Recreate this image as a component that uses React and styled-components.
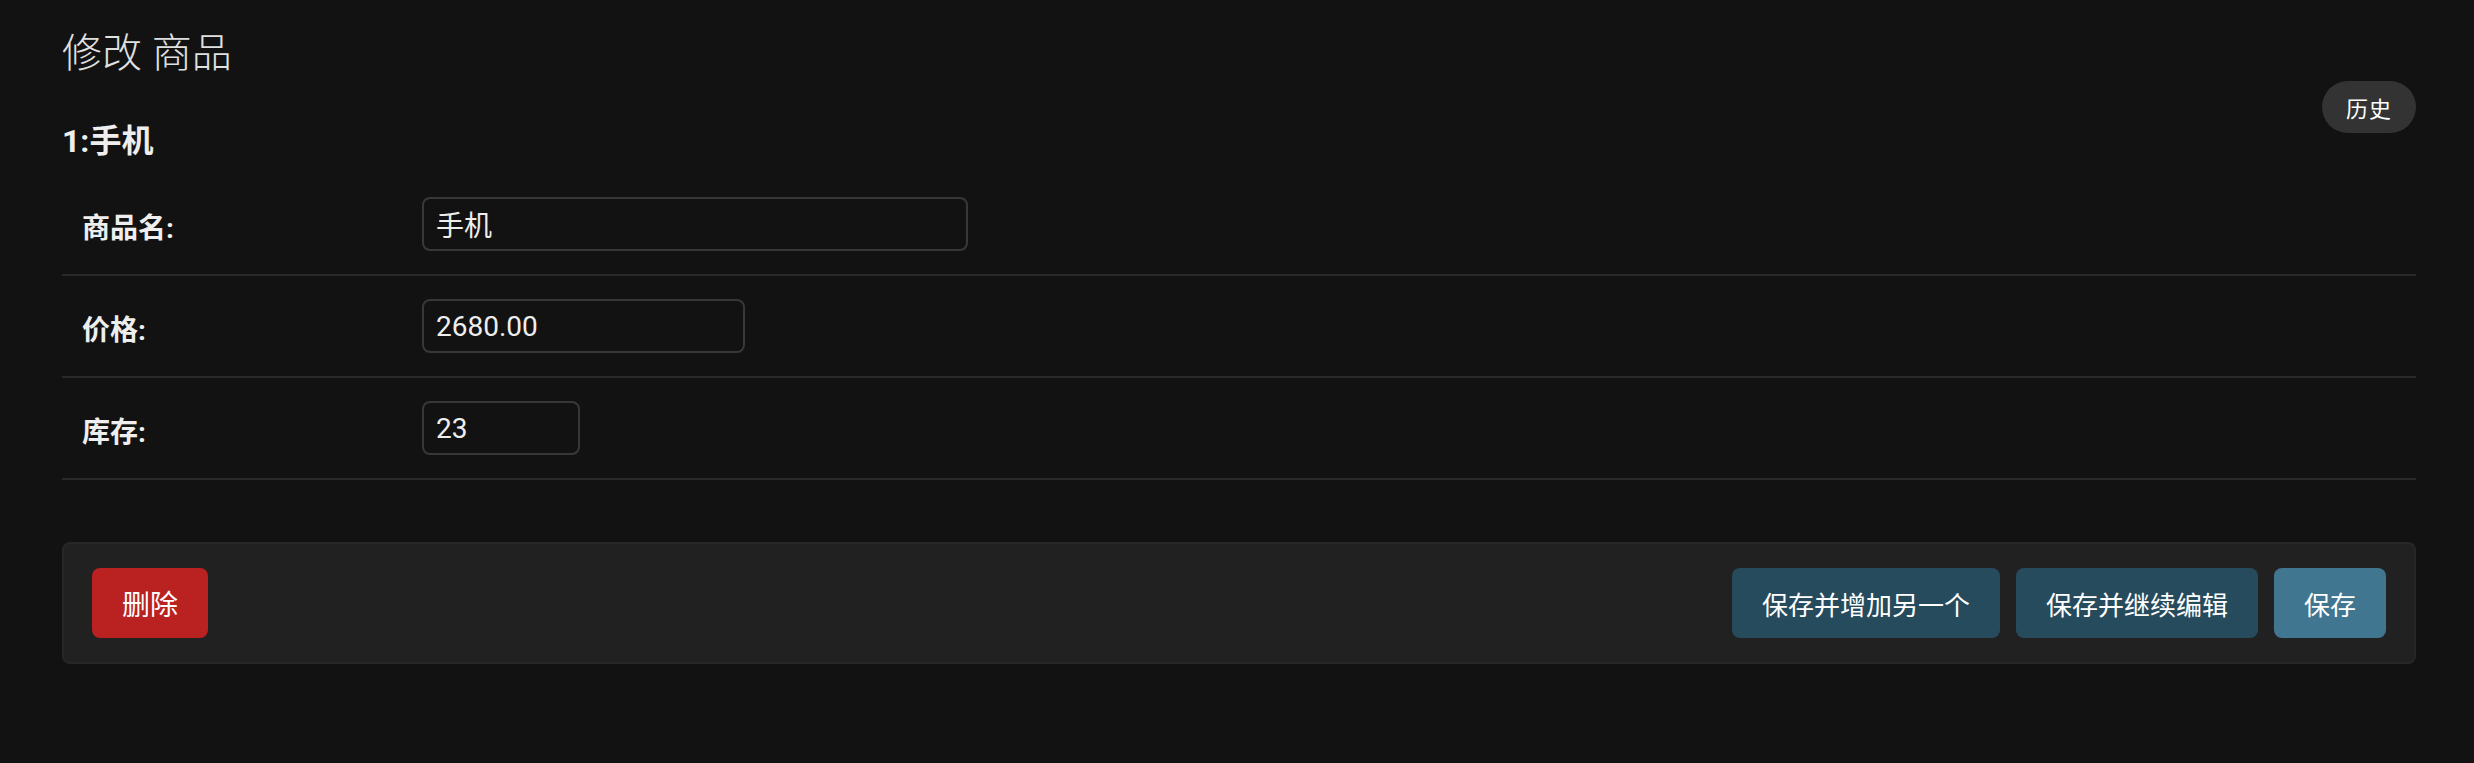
import React from 'react';
import styled, { createGlobalStyle } from 'styled-components';

const GlobalStyle = createGlobalStyle`
   html, body {
      margin:0;
      padding:0;
      background:#121212;
   }
   body {
      font-family: Roboto, "Noto Sans CJK SC", sans-serif;
      color:#eeeeee;
   }
`

const Content = styled.div`
   padding:30px 58px 40px 62px;
`
const Header = styled.div`
   display:flex;
   flex-direction:row;
   justify-content:space-between;
   align-items:flex-start;
`
const TitleBlock = styled.div`
   display:flex;
   flex-direction:column;
`
const Title = styled.h1`
   margin:0;
   font-size:40px;
   line-height:48px;
   font-weight:300;
   color:#e0e0e0;
`
const Subtitle = styled.h2`
   margin:43px 0 13px 0;
   font-size:32px;
   line-height:40px;
   font-weight:700;
   color:#eeeeee;
`
const HistoryLink = styled.a`
   margin-top:51px;
   display:inline-flex;
   align-items:center;
   height:52px;
   padding:0 24px;
   border-radius:30px;
   background:#333333;
   color:#ffffff;
   font-size:22px;
   letter-spacing:1px;
   text-decoration:none;
   cursor:pointer;
`
const Fieldset = styled.div`
   display:flex;
   flex-direction:column;
`
const FormRow = styled.div`
   display:flex;
   flex-direction:row;
   align-items:center;
   height:100px;
   padding:0 20px;
   border-bottom:2px solid #2a2a2a;
`
const Label = styled.label`
   width:340px;
   flex-shrink:0;
   padding-top:4px;
   font-size:28px;
   font-weight:700;
   color:#eeeeee;
`
const Input = styled.input`
   box-sizing:border-box;
   width:${({ $width }) => $width}px;
   height:54px;
   padding:0 12px;
   border:2px solid #383838;
   border-radius:8px;
   background:#121212;
   color:#eeeeee;
   font-family:Roboto, "Noto Sans CJK SC", sans-serif;
   font-size:28px;
   outline:0;
`
const SubmitRow = styled.div`
   margin-top:62px;
   display:flex;
   flex-direction:row;
   align-items:center;
   gap:16px;
   padding:24px 28px;
   background:#212121;
   border:2px solid #272727;
   border-radius:8px;
`
const buttonColors = {
   delete: '#ba2121',
   normal: '#264b5d',
   default: '#417690',
}
const Button = styled.button`
   display:inline-flex;
   align-items:center;
   height:70px;
   padding:0 30px;
   border:none;
   border-radius:8px;
   background:${({ $variant }) => buttonColors[$variant]};
   color:#ffffff;
   font-family:Roboto, "Noto Sans CJK SC", sans-serif;
   font-size:${({ $variant }) => ($variant === 'delete' ? 28 : 26)}px;
   cursor:pointer;
   margin-right:${({ $push }) => ($push ? 'auto' : '0')};
`

const fields = [
   { label: '商品名:', value: '手机', width: 546 },
   { label: '价格:', value: '2680.00', width: 323 },
   { label: '库存:', value: '23', width: 158 },
]

const App = () => {
   return(
      <Content>
         <GlobalStyle/>
         <Header>
            <TitleBlock>
               <Title>修改 商品</Title>
               <Subtitle>1:手机</Subtitle>
            </TitleBlock>
            <HistoryLink>历史</HistoryLink>
         </Header>

         <Fieldset>
            {fields.map((f) => (
               <FormRow key={f.label}>
                  <Label>{f.label}</Label>
                  <Input $width={f.width} defaultValue={f.value}/>
               </FormRow>
            ))}
         </Fieldset>

         <SubmitRow>
            <Button $variant="delete" $push>删除</Button>
            <Button $variant="normal">保存并增加另一个</Button>
            <Button $variant="normal">保存并继续编辑</Button>
            <Button $variant="default">保存</Button>
         </SubmitRow>
      </Content>
   )
}

export default App;
